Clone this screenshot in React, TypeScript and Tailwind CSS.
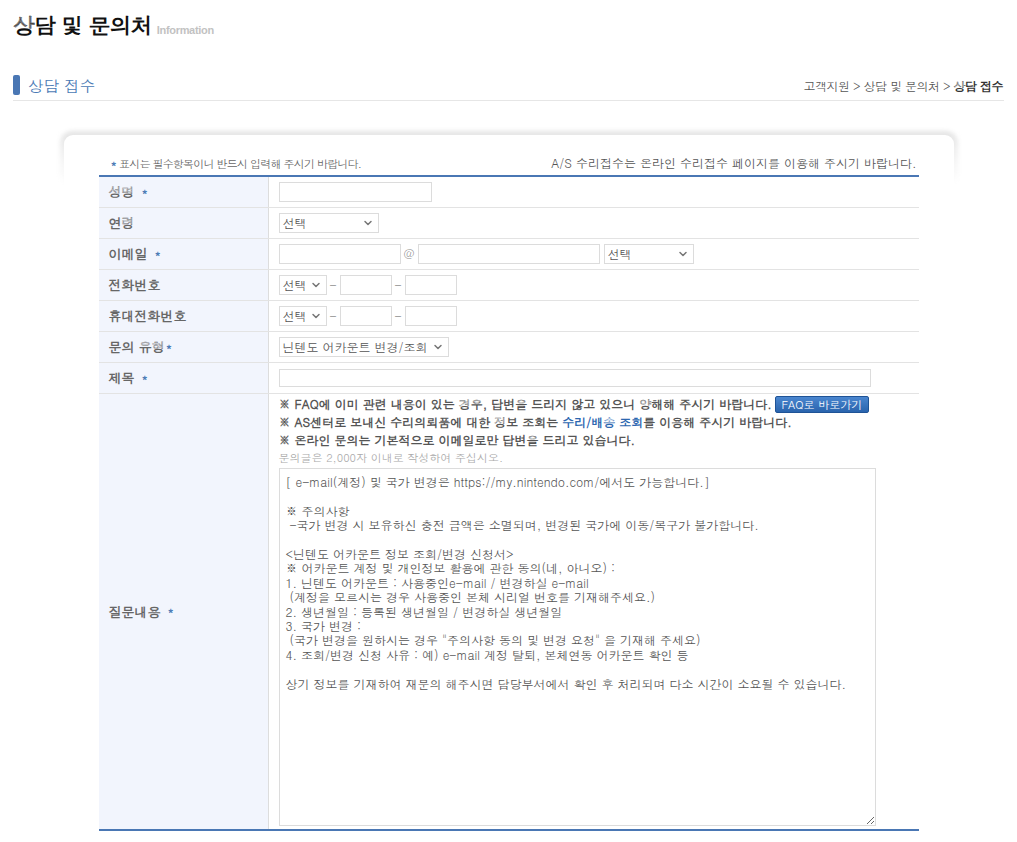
import { ChevronDown } from "lucide-react";

const font = "font-['Dotum','Noto_Sans_CJK_KR',sans-serif]";

const inquiryText = `[ e-mail(계정) 및 국가 변경은 https://my.nintendo.com/에서도 가능합니다.]

※ 주의사항
 -국가 변경 시 보유하신 충전 금액은 소멸되며, 변경된 국가에 이동/복구가 불가합니다.

<닌텐도 어카운트 정보 조회/변경 신청서>
※ 어카운트 계정 및 개인정보 활용에 관한 동의(네, 아니오) :
1. 닌텐도 어카운트 : 사용중인e-mail / 변경하실 e-mail
 (계정을 모르시는 경우 사용중인 본체 시리얼 번호를 기재해주세요.)
2. 생년월일 : 등록된 생년월일 / 변경하실 생년월일
3. 국가 변경 :
 (국가 변경을 원하시는 경우 "주의사항 동의 및 변경 요청" 을 기재해 주세요)
4. 조회/변경 신청 사유 : 예) e-mail 계정 탈퇴, 본체연동 어카운트 확인 등

상기 정보를 기재하여 재문의 해주시면 담당부서에서 확인 후 처리되며 다소 시간이 소요될 수 있습니다.`;

function Star({ gap = true }: { gap?: boolean }) {
    return (
        <span className={`text-[#4a7ab5] text-[11px] ${gap ? "ml-[7px]" : "ml-[1px]"}`}>*</span>
    );
}

function Field({ w }: { w: string }) {
    return <div className={`${w} h-[20px] border border-[#dcdcdc] bg-white`} />;
}

function Select({ w, label }: { w: string; label: string }) {
    return (
        <div
            className={`${w} h-[20px] border border-[#dcdcdc] bg-white flex items-center justify-between pl-[3px] pr-[4px] text-[12px] text-[#555]`}
        >
            <span className="whitespace-nowrap leading-none">{label}</span>
            <ChevronDown className="w-[12px] h-[12px] text-[#777]" strokeWidth={3} />
        </div>
    );
}

function Row({
    label,
    children,
    last,
}: {
    label: React.ReactNode;
    children: React.ReactNode;
    last?: boolean;
}) {
    return (
        <div className={`grid grid-cols-[170px_1fr] ${last ? "" : "border-b border-[#e3e3e3]"}`}>
            <div className="bg-[#f2f5fd] border-r border-[#dddddd] pl-[10px] flex items-center text-[13px] font-bold text-[#666] min-h-[30px]">
                {label}
            </div>
            <div className="pl-[10px] flex items-center min-h-[30px]">{children}</div>
        </div>
    );
}

function Dash() {
    return <span className="mx-[3px] text-[#888] text-[12px]">-</span>;
}

export default function App() {
    return (
        <div className={`${font} bg-white w-[1017px] min-h-[842px] px-[13px] text-[#555]`}>
            {/* page title */}
            <div className="pt-[7px] flex items-end">
                <h1 className="text-[22px] font-bold text-[#111] leading-[36px] tracking-[-1px]">
                    상담 및 문의처
                </h1>
                <span className="ml-[5px] mb-[5px] text-[11px] font-bold text-[#c2c2c2] font-['Liberation_Sans',sans-serif] tracking-[-0.3px]">
                    Information
                </span>
            </div>

            {/* section header */}
            <div className="mt-[31px] flex items-center justify-between border-b border-[#e6e6e6] pb-[4px]">
                <div className="flex items-center">
                    <span className="w-[7px] h-[20px] rounded-[2px] bg-[#4a77b4]" />
                    <span className="ml-[8px] text-[15.5px] text-[#4a7ab5] leading-[22px]">상담 접수</span>
                </div>
                <div className="text-[12px] text-[#555] pr-[1px] pt-[1px] tracking-[-0.5px]">
                    고객지원 &gt; 상담 및 문의처 &gt; <b className="text-[#333]">상담 접수</b>
                </div>
            </div>

            {/* card */}
            <div className="relative mx-auto mt-[31px] w-[896px]">
                <div className="absolute -inset-x-[1px] -top-[1px] h-[55px] rounded-[12px] bg-gradient-to-b from-[#e4e4e4] via-[#f4f4f4] to-white blur-[2px]" />
                <div className="absolute inset-x-[3px] top-[3px] h-[80px] rounded-[9px] bg-white" />
                <div className="relative w-[820px] mx-auto pt-[22px]">
                    <div className="flex items-end justify-between h-[20px] pb-[2px]">
                        <div className="pl-[12px] text-[11px] text-[#666] tracking-[-0.8px]">
                            <span className="text-[#4a7ab5] font-bold">*</span> 표시는 필수항목이니 반드시 입력해 주시기 바랍니다.
                        </div>
                        <div className="text-[12px] text-[#555] pr-[2px]">
                            A/S 수리접수는 온라인 수리접수 페이지를 이용해 주시기 바랍니다.
                        </div>
                    </div>

                    <div className="mt-[1px] border-t-2 border-b-2 border-[#4a77b4]">
                        <Row label={<>성명<Star /></>}>
                            <Field w="w-[153px]" />
                        </Row>
                        <Row label="연령">
                            <Select w="w-[100px]" label="선택" />
                        </Row>
                        <Row label={<>이메일<Star /></>}>
                            <Field w="w-[122px]" />
                            <span className="mx-[3px] text-[11px] text-[#888]">@</span>
                            <Field w="w-[182px]" />
                            <div className="ml-[4px]">
                                <Select w="w-[90px]" label="선택" />
                            </div>
                        </Row>
                        <Row label="전화번호">
                            <Select w="w-[48px]" label="선택" />
                            <Dash />
                            <Field w="w-[52px]" />
                            <Dash />
                            <Field w="w-[52px]" />
                        </Row>
                        <Row label="휴대전화번호">
                            <Select w="w-[48px]" label="선택" />
                            <Dash />
                            <Field w="w-[52px]" />
                            <Dash />
                            <Field w="w-[52px]" />
                        </Row>
                        <Row label={<>문의 유형<Star gap={false} /></>}>
                            <Select w="w-[170px]" label="닌텐도 어카운트 변경/조회" />
                        </Row>
                        <Row label={<>제목<Star /></>}>
                            <div className="w-[592px] h-[18px] border border-[#dcdcdc] bg-white" />
                        </Row>
                        <Row last label={<>질문내용<Star /></>}>
                            <div className="pt-[1px] pb-[3px] w-full">
                                <div className="text-[12px] font-bold text-[#555] leading-[18px]">
                                    <div className="flex items-center">
                                        ※ FAQ에 이미 관련 내용이 있는 경우, 답변을 드리지 않고 있으니 양해해 주시기 바랍니다.
                                        <button className="ml-[3px] h-[17px] w-[94px] rounded-[2px] border border-[#1f5396] bg-gradient-to-b from-[#4a86cf] to-[#2a64ad] text-white text-[11px] font-normal leading-none">
                                            FAQ로 바로가기
                                        </button>
                                    </div>
                                    <div>
                                        ※ AS센터로 보내신 수리의뢰품에 대한 정보 조회는{" "}
                                        <span className="text-[#2d67b0]">수리/배송 조회</span>를 이용해 주시기 바랍니다.
                                    </div>
                                    <div>※ 온라인 문의는 기본적으로 이메일로만 답변을 드리고 있습니다.</div>
                                </div>
                                <div className="text-[11px] text-[#aaa] leading-[18px]">
                                    문의글은 2,000자 이내로 작성하여 주십시오.
                                </div>
                                <textarea
                                    readOnly
                                    defaultValue={inquiryText}
                                    className={`${font} mt-[1px] block w-[597px] h-[358px] border border-[#dcdcdc] px-[6px] pt-[6px] text-[12px] leading-[14.4px] text-[#555] outline-none`}
                                />
                            </div>
                        </Row>
                    </div>
                </div>
            </div>
        </div>
    );
}
